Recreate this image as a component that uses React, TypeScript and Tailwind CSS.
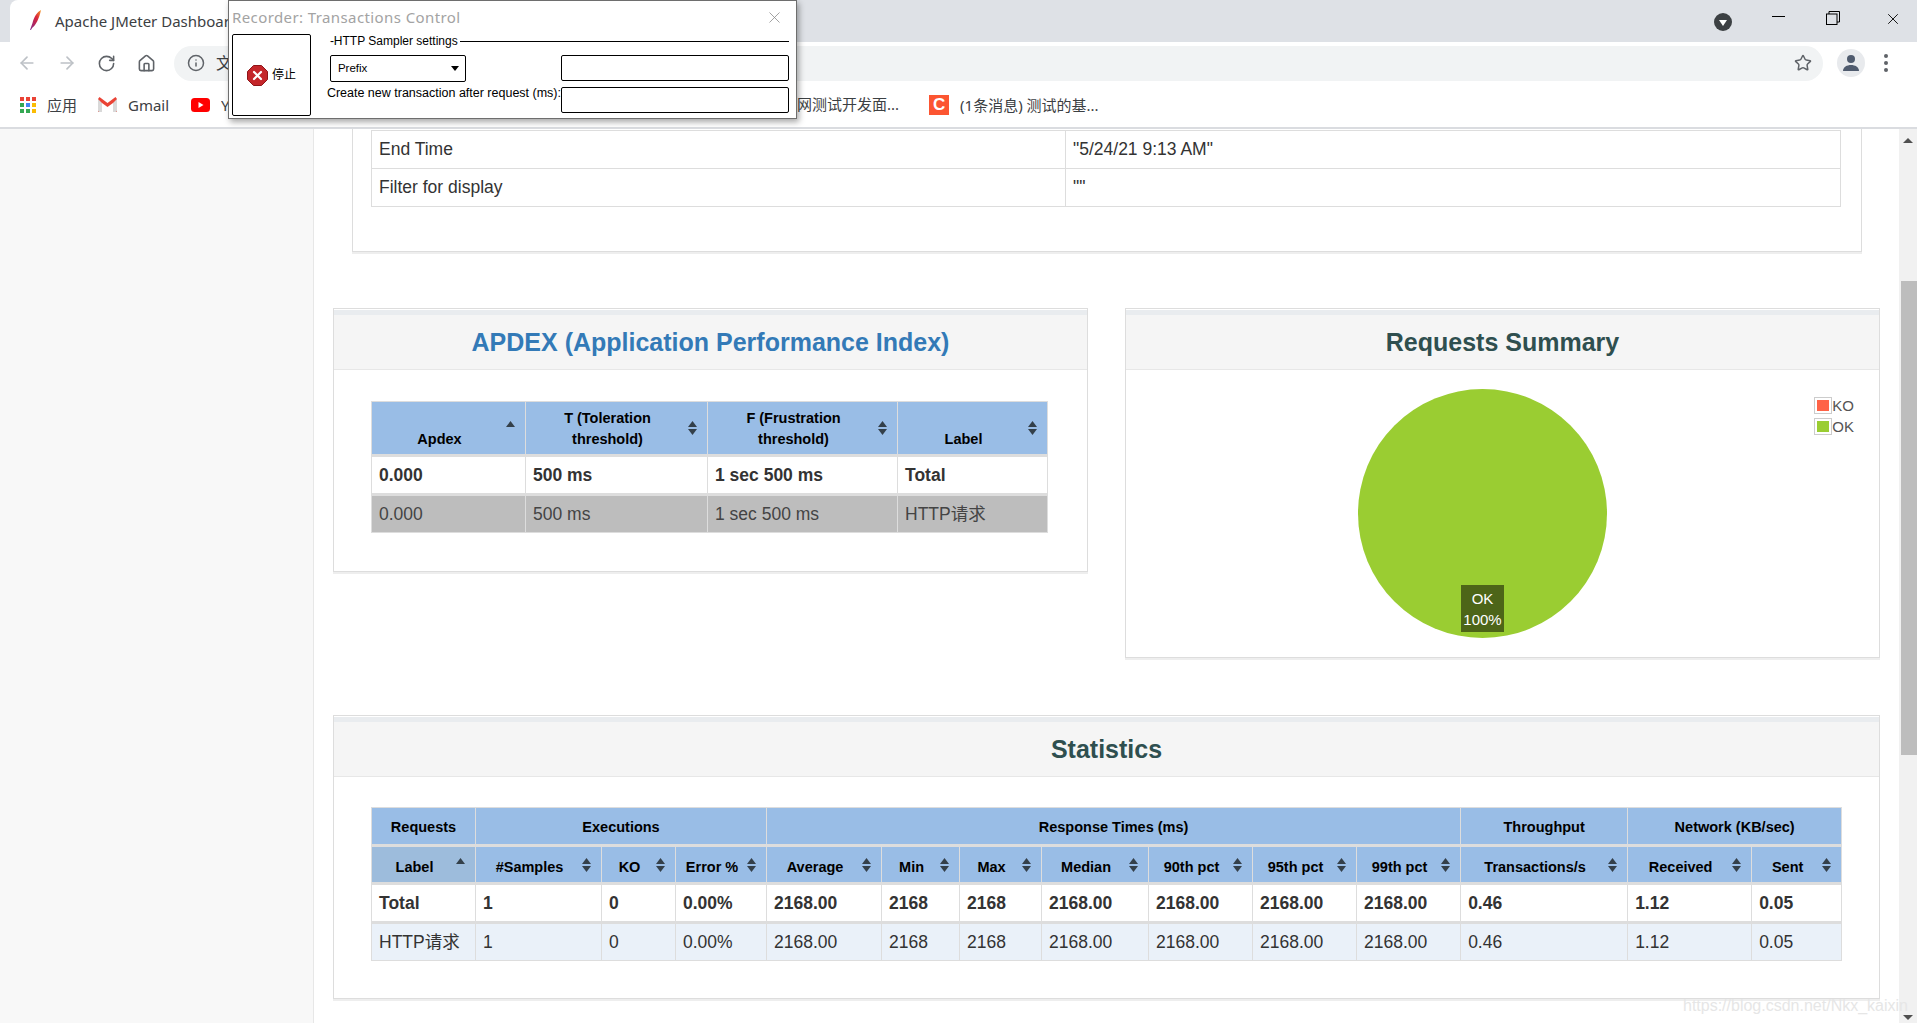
import { ArrowLeft, ArrowRight, Home, Info, RotateCw, Star, X } from 'lucide-react';

const UI_FONT = "font-['Noto_Sans','Noto_Sans_CJK_SC',sans-serif]";

function SortIcon({ mode = 'both' }: { mode?: 'both' | 'asc' }) {
  return (
    <svg className="absolute right-[10px] top-1/2 -translate-y-1/2 w-[9px] h-[16px]" viewBox="0 0 9 16" fill="#34404a">
      <path d="M4.5 1L9 7H0z" />
      {mode === 'both' && <path d="M0 9h9l-4.500 6z" />}
    </svg>
  );
}

function Head({ children, sort, className = '' }: { children: React.ReactNode; sort?: 'both' | 'asc'; className?: string }) {
  return (
    <th className={`relative align-bottom border border-[#ddd] border-b-[3px] pl-[6px] pr-[24px] pb-[4px] text-[14.500px] leading-[21px] font-bold text-black text-center ${className}`}>
      {children}
      {sort && <SortIcon mode={sort} />}
    </th>
  );
}

function Group({ children, span = 1 }: { children: React.ReactNode; span?: number }) {
  return (
    <th colSpan={span} className="border border-[#ddd] border-b-[3px] bg-[#99bde6] px-[6px] pt-[3px] text-[14.500px] font-bold text-black text-center">
      {children}
    </th>
  );
}

function Card({ title, blue, className = '', children }: { title: string; blue?: boolean; className?: string; children: React.ReactNode }) {
  return (
    <section className={`border border-[#ddd] shadow-[0_2px_0_#eeeeee] bg-white ${className}`}>
      <div className="mt-[1px] border-t-[5px] border-t-[#e9ecef] border-b border-b-[#e7e7e7] bg-[#f5f5f5] h-[60px] pt-[1px] flex items-center justify-center">
        <h2 className={`text-[25px] font-bold ${blue ? 'text-[#337ab7]' : 'text-[#2f4f4f]'}`}>{title}</h2>
      </div>
      {children}
    </section>
  );
}

const statsHead = ['#Samples', 'KO', 'Error %', 'Average', 'Min', 'Max', 'Median', '90th pct', '95th pct', '99th pct', 'Transactions/s', 'Received', 'Sent'];

const statsCols = ['w-[104px]', 'w-[126px]', 'w-[74px]', 'w-[91px]', 'w-[115px]', 'w-[78px]', 'w-[82px]', 'w-[107px]', 'w-[104px]', 'w-[104px]', 'w-[104px]', 'w-[167px]', 'w-[124px]', 'w-[90px]'];

const statsValues = ['1', '0', '0.00%', '2168.00', '2168', '2168', '2168.00', '2168.00', '2168.00', '2168.00', '0.46', '1.12', '0.05'];

function BookmarkText({ children }: { children: React.ReactNode }) {
  return <span className="text-[15px] text-[#3c4043] whitespace-nowrap">{children}</span>;
}

function Recorder() {
  return (
    <div className={`absolute left-[228px] top-0 w-[569px] h-[119px] bg-white border border-[#6e6e6e] shadow-[2px_3px_6px_rgba(0,0,0,0.35)] z-10 ${UI_FONT}`}>
      <div className="h-[34px] flex items-center justify-between pl-[3px] pr-[12px] -mt-[1px]">
        <span className="text-[15px] tracking-[0.400px] text-[#a3a3a3]">Recorder: Transactions Control</span>
        <X className="w-[19px] h-[19px] text-[#8a8a8a]" strokeWidth={1} />
      </div>
      <div className="flex pl-[3px] pr-[7px] font-['Liberation_Sans','Noto_Sans_CJK_SC',sans-serif] text-black">
        <button className="w-[80px] h-[82px] border border-black rounded-[2px] flex items-center justify-center gap-[4px] text-[12px]">
          <svg className="w-[21px] h-[21px]" viewBox="0 0 21 21">
            <path d="M6.500 0.500h8l6 6v8l-6 6h-8l-6-6v-8z" fill="#c4262a" stroke="#8f1518" />
            <path d="M7 7l7 7M14 7l-7 7" stroke="#fff" strokeWidth="2.200" strokeLinecap="round" />
          </svg>
          停止
        </button>
        <div className="flex-1 ml-[12px]">
          <div className="flex items-center h-[14px] pl-[7px] text-[12px] gap-[2px]">
            <span className="whitespace-nowrap">-HTTP Sampler settings</span>
            <span className="flex-1 h-px bg-black" />
          </div>
          <div className="flex justify-between items-start mt-[7px] pl-[7px]">
            <div className="w-[136px] h-[27px] border border-black rounded-[2px] flex items-center justify-between pl-[7px] pr-[6px] text-[11.500px]">
              Prefix
              <span className="w-0 h-0 border-x-[4.500px] border-x-transparent border-t-[5px] border-t-black" />
            </div>
            <div className="w-[228px] h-[26px] border border-black rounded-[2px]" />
          </div>
          <div className="flex justify-between items-center mt-[5px] pl-[4px]">
            <span className="text-[12.500px] whitespace-nowrap -mt-[13px]">Create new transaction after request (ms):</span>
            <div className="w-[228px] h-[26px] border border-black rounded-[2px]" />
          </div>
        </div>
      </div>
    </div>
  );
}

function BrowserChrome() {
  return (
    <header className={`shrink-0 ${UI_FONT}`}>
      <div className="h-[42px] bg-[#dee1e6] flex">
        <div className="ml-[10px] w-[300px] h-[42px] bg-white rounded-t-[8px] flex items-center pl-[15px] gap-[10px]">
          <svg className="w-[20px] h-[24px] shrink-0" viewBox="0 0 20 24">
            <defs>
              <linearGradient id="feather" x1="0" y1="1" x2="1" y2="0">
                <stop offset="0" stopColor="#7b2a8f" />
                <stop offset="0.6" stopColor="#d8243c" />
                <stop offset="1" stopColor="#f59a23" />
              </linearGradient>
            </defs>
            <path d="M16 1c-4 2-7 7-8.500 13L5 21c1 0 1.500-.500 2-2 4-3 7-9 9-18z" fill="url(#feather)" />
          </svg>
          <span className="text-[15px] text-[#3c4043] whitespace-nowrap">Apache JMeter Dashboard</span>
        </div>
        <div className="ml-auto flex items-center">
          <span className="w-[18px] h-[18px] mt-[2px] rounded-full bg-[#3c4043] flex items-center justify-center mr-[40px]">
            <span className="w-0 h-0 border-x-[4.500px] border-x-transparent border-t-[6px] border-t-white mt-[1px]" />
          </span>
          <span className="w-[13px] h-px bg-black mr-[41px] -mt-[9px]" />
          <svg className="w-[14px] h-[14px] mr-[44px] -mt-[7px]" viewBox="0 0 14 14" fill="none" stroke="#000">
            <path d="M3 3V.500h10.500V11H11" />
            <rect x=".500" y="3" width="10.500" height="10.500" />
          </svg>
          <X className="w-[18px] h-[18px] mr-[15px] -mt-[5px] text-black" strokeWidth={1.200} />
        </div>
      </div>
      <div className="h-[42px] bg-white flex items-center pl-[17px] pr-[23px]">
        <ArrowLeft className="w-[20px] h-[20px] text-[#bdc1c6]" strokeWidth={2} />
        <ArrowRight className="w-[20px] h-[20px] text-[#bdc1c6] ml-[20px]" strokeWidth={2} />
        <RotateCw className="w-[19px] h-[19px] text-[#5f6368] ml-[20px]" strokeWidth={2} />
        <Home className="w-[19px] h-[19px] text-[#5f6368] ml-[21px]" strokeWidth={2} />
        <div className="ml-[18px] w-[1649px] h-[35px] bg-[#f1f3f4] rounded-full flex items-center pl-[13px] pr-[11px]">
          <Info className="w-[18px] h-[18px] text-[#5f6368]" strokeWidth={2} />
          <span className="ml-[11px] text-[16px] text-[#3c4043]">文</span>
          <Star className="w-[18px] h-[18px] ml-auto text-[#5f6368]" strokeWidth={2} />
        </div>
        <span className="ml-[14px] w-[28px] h-[28px] rounded-full bg-[#e8eaed] flex items-center justify-center overflow-hidden">
          <svg className="w-[18px] h-[18px]" viewBox="0 0 18 18" fill="#4f5b6e">
            <circle cx="9" cy="5" r="4" />
            <path d="M1 17c0-4 4-6 8-6s8 2 8 6z" />
          </svg>
        </span>
        <span className="ml-[19px] flex flex-col gap-[3px]">
          <span className="w-[4px] h-[4px] rounded-full bg-[#5f6368]" />
          <span className="w-[4px] h-[4px] rounded-full bg-[#5f6368]" />
          <span className="w-[4px] h-[4px] rounded-full bg-[#5f6368]" />
        </span>
      </div>
      <div className="h-[45px] bg-white flex items-center pl-[20px] pb-[2px] border-b-[2px] border-b-[#dadce0]">
        <svg className="w-[16px] h-[16px] shrink-0" viewBox="0 0 16 16">
          <rect x="0" y="0" width="4" height="4" fill="#ea4335" />
          <rect x="6" y="0" width="4" height="4" fill="#ea4335" />
          <rect x="12" y="0" width="4" height="4" fill="#ea4335" />
          <rect x="0" y="6" width="4" height="4" fill="#34a853" />
          <rect x="6" y="6" width="4" height="4" fill="#4285f4" />
          <rect x="12" y="6" width="4" height="4" fill="#fbbc04" />
          <rect x="0" y="12" width="4" height="4" fill="#34a853" />
          <rect x="6" y="12" width="4" height="4" fill="#34a853" />
          <rect x="12" y="12" width="4" height="4" fill="#fbbc04" />
        </svg>
        <span className="ml-[11px] w-[51px]"><BookmarkText>应用</BookmarkText></span>
        <svg className="w-[19px] h-[15px] shrink-0" viewBox="0 0 19 15">
          <path d="M0 2v13h4V6l5.500 4L15 6v9h4V2l-1.500-2L9.500 6 1.500 0z" fill="#ea4335" />
          <path d="M4 6v9H1.500Q0 15 0 13.500V2zM15 6v9h2.500q1.500 0 1.500-1.500V2z" fill="#d9d9d9" />
        </svg>
        <span className="ml-[11px] w-[63px]"><BookmarkText>Gmail</BookmarkText></span>
        <svg className="w-[19px] h-[14px] shrink-0" viewBox="0 0 19 14">
          <rect width="19" height="14" rx="3.500" fill="#f00" />
          <path d="M7.500 4l5 3-5 3z" fill="#fff" />
        </svg>
        <span className="ml-[11px] w-[576px] overflow-hidden"><BookmarkText>YouTube</BookmarkText></span>
        <BookmarkText>网测试开发面...</BookmarkText>
        <span className="ml-[30px] w-[20px] h-[20px] bg-[#fc5531] flex items-center justify-center text-white font-['Liberation_Sans',sans-serif] font-bold text-[17px]">C</span>
        <span className="ml-[11px]"><BookmarkText>(1条消息) 测试的基...</BookmarkText></span>
      </div>
    </header>
  );
}

export default function App() {
  return (
    <div className="relative h-screen w-full overflow-hidden flex flex-col bg-white">
      <BrowserChrome />
      <Recorder />
      <div className="flex flex-1 min-h-0 font-['Liberation_Sans','Noto_Sans_CJK_SC',sans-serif] text-[#333]">
        <aside className="w-[314px] shrink-0 bg-[#f8f8f8] border-r border-[#e7e7e7]" />
        <main className="flex-1 min-w-0 overflow-hidden px-[19px]">
          <div className="ml-[19px] mr-[18px] pl-[18px] pr-[20px] pb-[44px] border-x border-b border-[#ddd] shadow-[0_2px_0_#eeeeee] pt-px">
            <table className="w-full table-fixed border-collapse text-[17.500px]">
              <tbody>
                <tr className="h-[38px]">
                  <td className="w-[694px] border border-[#ddd] px-[7px]">End Time</td>
                  <td className="border border-[#ddd] px-[7px]">"5/24/21 9:13 AM"</td>
                </tr>
                <tr className="h-[38px]">
                  <td className="border border-[#ddd] px-[7px]">Filter for display</td>
                  <td className="border border-[#ddd] px-[7px]">""</td>
                </tr>
              </tbody>
            </table>
          </div>

          <div className="mt-[56px] flex justify-between items-start">
            <Card title="APDEX (Application Performance Index)" blue className="w-[755px]">
              <div className="pt-[31px] pb-[38px] pl-[37px]">
                <table className="w-[676px] table-fixed border-collapse text-[17.500px]">
                  <thead>
                    <tr className="h-[54px]">
                      <Head sort="asc" className="w-[154px] bg-[#99bde6]">Apdex</Head>
                      <Head sort="both" className="w-[182px] bg-[#99bde6]">T (Toleration threshold)</Head>
                      <Head sort="both" className="w-[190px] bg-[#99bde6]">F (Frustration threshold)</Head>
                      <Head sort="both" className="w-[150px] bg-[#99bde6]">Label</Head>
                    </tr>
                  </thead>
                  <tbody>
                    <tr className="h-[39px] font-bold">
                      <td className="border border-[#ddd] border-b-[3px] px-[7px]">0.000</td>
                      <td className="border border-[#ddd] border-b-[3px] px-[7px]">500 ms</td>
                      <td className="border border-[#ddd] border-b-[3px] px-[7px]">1 sec 500 ms</td>
                      <td className="border border-[#ddd] border-b-[3px] px-[7px]">Total</td>
                    </tr>
                    <tr className="h-[38px] bg-[#bdbdbd] text-[#444]">
                      <td className="border border-[#ddd] px-[7px]">0.000</td>
                      <td className="border border-[#ddd] px-[7px]">500 ms</td>
                      <td className="border border-[#ddd] px-[7px]">1 sec 500 ms</td>
                      <td className="border border-[#ddd] px-[7px]">HTTP请求</td>
                    </tr>
                  </tbody>
                </table>
              </div>
            </Card>

            <Card title="Requests Summary" className="w-[755px]">
              <div className="h-[287px] pt-[19px] pl-[232px] pr-[25px] flex items-start justify-between">
                <div className="relative w-[249px] h-[249px] rounded-full bg-[#9acd32]">
                  <div className="absolute left-[103px] top-[196px] w-[43px] h-[47px] bg-[#4d6518] text-white text-[15px] leading-[21px] text-center flex flex-col justify-center">
                    <span>OK</span>
                    <span>100%</span>
                  </div>
                </div>
                <div className="mt-[8px] flex flex-col gap-[4px] text-[15px] leading-[17px] text-[#545454]">
                  <div className="flex items-center">
                    <span className="w-[18px] h-[17px] border border-[#ccc] p-[2px]">
                      <span className="block w-full h-full bg-[#ff6347]" />
                    </span>
                    KO
                  </div>
                  <div className="flex items-center">
                    <span className="w-[18px] h-[17px] border border-[#ccc] p-[2px]">
                      <span className="block w-full h-full bg-[#9acd32]" />
                    </span>
                    OK
                  </div>
                </div>
              </div>
            </Card>
          </div>

          <Card title="Statistics" className="mt-[57px]">
            <div className="pt-[30px] pb-[37px] pl-[37px]">
              <table className="w-[1470px] table-fixed border-collapse text-[17.500px]">
                <colgroup>
                  {statsCols.map((w, i) => (
                    <col key={i} className={w} />
                  ))}
                </colgroup>
                <thead>
                  <tr className="h-[38px]">
                    <Group>Requests</Group>
                    <Group span={3}>Executions</Group>
                    <Group span={7}>Response Times (ms)</Group>
                    <Group>Throughput</Group>
                    <Group span={2}>Network (KB/sec)</Group>
                  </tr>
                  <tr className="h-[38px]">
                    <Head sort="asc" className="bg-[#9dbcdc]">Label</Head>
                    {statsHead.map((name) => (
                      <Head key={name} sort="both" className="bg-[#99bde6]">{name}</Head>
                    ))}
                  </tr>
                </thead>
                <tbody>
                  <tr className="h-[39px] font-bold">
                    <td className="border border-[#ddd] border-b-[3px] px-[7px]">Total</td>
                    {statsValues.map((v, i) => (
                      <td key={i} className="border border-[#ddd] border-b-[3px] px-[7px]">{v}</td>
                    ))}
                  </tr>
                  <tr className="h-[38px] bg-[#eaf1f9]">
                    <td className="border border-[#ddd] px-[7px]">HTTP请求</td>
                    {statsValues.map((v, i) => (
                      <td key={i} className="border border-[#ddd] px-[7px]">{v}</td>
                    ))}
                  </tr>
                </tbody>
              </table>
            </div>
          </Card>
        </main>
        <div className="w-[18px] shrink-0 bg-[#f1f1f1] flex flex-col items-center">
          <span className="mt-[9px] w-0 h-0 border-x-[5px] border-x-transparent border-b-[5px] border-b-[#505050]" />
          <span className="mt-[138px] ml-[2px] w-[16px] h-[474px] bg-[#bdbdbd]" />
          <span className="mt-auto mb-[3px] w-0 h-0 border-x-[5px] border-x-transparent border-t-[5px] border-t-[#505050]" />
        </div>
      </div>
      <span className="absolute right-[9px] bottom-[5px] text-[16px] text-[#e6e6e6] font-['Liberation_Sans',sans-serif] pointer-events-none">
        https://blog.csdn.net/Nkx_kaixin
      </span>
    </div>
  );
}
